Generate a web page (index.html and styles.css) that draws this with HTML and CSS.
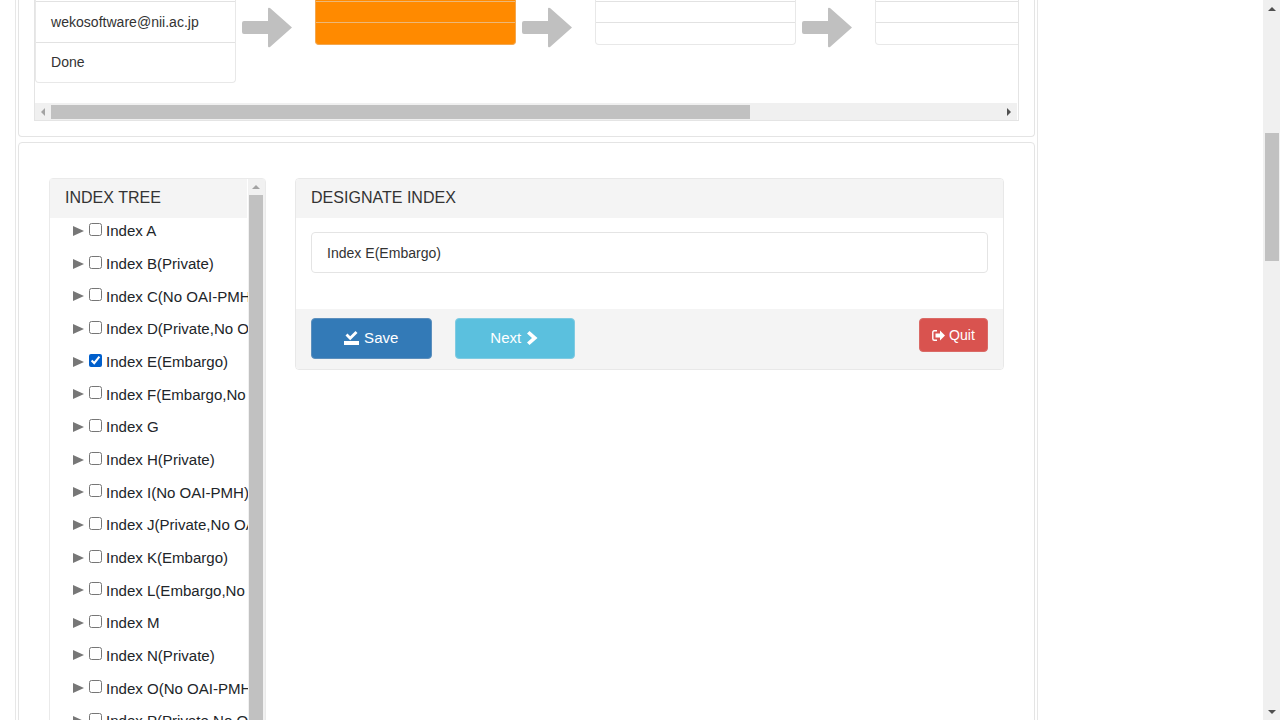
FILE: index.html
```
<!DOCTYPE html>
<html lang="en">
<head>
<meta charset="utf-8">
<title>Designate Index</title>
<link rel="stylesheet" href="styles.css">
</head>
<body>
<div class="content">
  <div class="wrapper">
    <section class="panel steps-panel">
      <div class="steps-box">
        <div class="steps">
          <ul class="card"><li class="tall">wekosoftware@nii.ac.jp</li><li class="tall last-tall">Done</li></ul>
          <svg class="arrow" viewBox="0 0 50 41"><path d="M2 14h24V2q0-2 2-1l22 19.500-22 19.500q-2 1-2-1V27H2q-2 0-2-2v-9q0-2 2-2z"/></svg>
          <ul class="card current"><li></li><li></li></ul>
          <svg class="arrow" viewBox="0 0 50 41"><path d="M2 14h24V2q0-2 2-1l22 19.500-22 19.500q-2 1-2-1V27H2q-2 0-2-2v-9q0-2 2-2z"/></svg>
          <ul class="card"><li></li><li></li></ul>
          <svg class="arrow" viewBox="0 0 50 41"><path d="M2 14h24V2q0-2 2-1l22 19.500-22 19.500q-2 1-2-1V27H2q-2 0-2-2v-9q0-2 2-2z"/></svg>
          <ul class="card"><li></li><li></li></ul>
        </div>
        <div class="hbar">
          <svg class="tip muted" viewBox="0 0 4 8"><path d="M4 0v8L0 4z"/></svg>
          <div class="hthumb"></div>
          <svg class="tip" viewBox="0 0 4 8"><path d="M0 0v8l4-4z"/></svg>
        </div>
      </div>
    </section>
    <section class="panel index-panel">
      <div class="tree">
        <div class="tree-main">
          <h3 class="heading">INDEX TREE</h3>
          <ul class="nodes">
            <li><i></i><input type="checkbox"><span>Index A</span></li>
            <li><i></i><input type="checkbox"><span>Index B(Private)</span></li>
            <li><i></i><input type="checkbox"><span>Index C(No OAI-PMH)</span></li>
            <li><i></i><input type="checkbox"><span>Index D(Private,No OAI-PMH)</span></li>
            <li><i></i><input type="checkbox" checked><span>Index E(Embargo)</span></li>
            <li><i></i><input type="checkbox"><span>Index F(Embargo,No OAI-PMH)</span></li>
            <li><i></i><input type="checkbox"><span>Index G</span></li>
            <li><i></i><input type="checkbox"><span>Index H(Private)</span></li>
            <li><i></i><input type="checkbox"><span>Index I(No OAI-PMH)</span></li>
            <li><i></i><input type="checkbox"><span>Index J(Private,No OAI-PMH)</span></li>
            <li><i></i><input type="checkbox"><span>Index K(Embargo)</span></li>
            <li><i></i><input type="checkbox"><span>Index L(Embargo,No OAI-PMH)</span></li>
            <li><i></i><input type="checkbox"><span>Index M</span></li>
            <li><i></i><input type="checkbox"><span>Index N(Private)</span></li>
            <li><i></i><input type="checkbox"><span>Index O(No OAI-PMH)</span></li>
            <li><i></i><input type="checkbox"><span>Index P(Private,No OAI-PMH)</span></li>
          </ul>
        </div>
        <div class="tree-bar">
          <svg viewBox="0 0 8 4"><path d="M0 4h8L4 0z"/></svg>
          <div class="tree-thumb"></div>
        </div>
      </div>
      <div class="designate">
        <h3 class="heading">DESIGNATE INDEX</h3>
        <div class="selected"><div class="item">Index E(Embargo)</div></div>
        <div class="footer">
          <button class="btn save"><svg viewBox="0 0 15 14"><path d="M0 10h15v4H0zM1.500 4.500l2-2 2.700 2.700L11.500 0l2 2-7.300 7.200z"/></svg>Save</button>
          <button class="btn next">Next<svg viewBox="0 0 11 14"><path d="M0 2.500L2.500 0 10.500 7l-8 7L0 11.500 5 7z"/></svg></button>
          <button class="btn quit"><svg viewBox="0 0 13 11"><path d="M5 .8H2.300Q.8.800.8 2.300v6.400q0 1.500 1.500 1.500H5" class="line"/><path d="M3.500 3.500H8V.5l5 5-5 5V7.500H3.500z"/></svg>Quit</button>
        </div>
      </div>
    </section>
  </div>
</div>
<div class="page-bar">
  <svg viewBox="0 0 8 4"><path d="M0 4h8L4 0z"/></svg>
  <div class="page-thumb"></div>
  <svg class="down" viewBox="0 0 8 4"><path d="M0 0h8L4 4z"/></svg>
</div>
</body>
</html>
```
FILE: styles.css
```
* { box-sizing: border-box; }
body {
  margin: 0;
  height: 720px;
  overflow: hidden;
  display: flex;
  background: #fff;
  color: #333;
  font-family: "Liberation Sans", Arial, sans-serif;
  font-size: 14.05px;
}
ul, h3 { margin: 0; padding: 0; list-style: none; font-weight: normal; }
svg { display: block; flex: none; }
.content { width: 1263px; padding-left: 15px; }
.wrapper {
  width: 1023px;
  height: 720px;
  padding: 0 2px;
  border: solid #e7e7e7;
  border-width: 0 1px;
  overflow: hidden;
}
.panel { border: 1px solid #e4e4e4; border-radius: 4px; }
.steps-panel {
  height: 137px;
  padding: 0 15px;
  border-top: 0;
  border-radius: 0 0 4px 4px;
  margin-bottom: 5px;
}
.steps-box {
  height: 121px;
  width: 985px;
  border: 1px solid #e4e4e4;
  border-top: 0;
  display: flex;
  flex-direction: column;
}
.steps { height: 103px; display: flex; align-items: flex-start; overflow: hidden; }
.card {
  flex: none;
  width: 201px;
  border: 1px solid #e8e8e8;
  border-top: 0;
  border-radius: 0 0 4px 4px;
  padding-top: 1px;
}
.card li { height: 21px; border-top: 1px solid #e2e2e2; }
.card li:last-child { height: 22px; }
.card li.tall { height: 41px; line-height: 41px; padding-left: 15px; }
.card li.last-tall { height: 40px; line-height: 38px; }
.current { background: #ff8a00; border-color: #f3a74f; overflow: hidden; }
.current li { border-color: #ecb777; }
.arrow { width: 50px; height: 41px; margin: 7px 23px 0 6px; fill: #c0c0c0; }
.hbar { height: 17px; display: flex; align-items: center; background: #f0f0f0; margin-right: 1px; padding: 0 6px; }
.hthumb { width: 699px; height: 14px; margin: 1px 0 0 6px; background: #c1c1c1; }
.tip { width: 4px; height: 8px; fill: #505050; margin-left: auto; }
.tip.muted { fill: #a3a3a3; margin-left: 0; }
.index-panel { height: 640px; padding: 35px 30px; display: flex; gap: 29px; align-items: flex-start; }
.tree {
  flex: none;
  width: 217px;
  height: 600px;
  border: 1px solid #eaeaea;
  border-radius: 4px;
  display: flex;
}
.tree-main { width: 198px; overflow: hidden; white-space: nowrap; }
.heading {
  height: 39px;
  line-height: 37px;
  padding-left: 15px;
  font-size: 16.05px;
  background: #f4f4f4;
}
.tree-main .heading { width: 197px; }
.nodes { font-size: 15.05px; color: #212529; margin-top: -3.4px; }
.nodes li { height: 32.67px; display: flex; align-items: center; padding-left: 23px; }
.nodes i { width: 0; height: 0; border: solid transparent; border-width: 5.5px 0 5.5px 11px; border-left-color: #777; }
.nodes input { width: 13px; height: 13px; margin: 0 4px 3px 5px; accent-color: #005fcc; }
.tree-bar { width: 17px; background: #f1f1f1; padding: 6px 2px 0 0; display: flex; flex-direction: column; align-items: center; }
.tree-bar svg { width: 8px; height: 4px; fill: #a3a3a3; }
.tree-thumb { width: 14px; flex: 1; margin-top: 6px; background: #c1c1c1; }
.designate { width: 709px; border: 1px solid #e8e8e8; border-radius: 4px; overflow: hidden; }
.selected { height: 91px; padding: 14px 15px; }
.item { height: 41px; line-height: 40px; padding-left: 15px; border: 1px solid #e4e4e4; border-radius: 4px; }
.footer { height: 60px; background: #f4f4f4; padding: 9px 15px; display: flex; align-items: flex-start; }
.btn {
  display: flex;
  align-items: center;
  justify-content: center;
  width: 120.5px;
  height: 41px;
  padding: 0 0 2px;
  border: 1px solid;
  border-radius: 4px;
  color: #fff;
  font: 15.05px "Liberation Sans", Arial, sans-serif;
}
.btn svg { fill: #fff; }
.save { background: #337ab7; border-color: #5c8fbd; }
.save svg { width: 15px; height: 14px; margin-right: 5px; }
.next { background: #5bc0de; border-color: #80cbe2; margin-left: 23px; padding-right: 1px; }
.next svg { width: 11px; height: 14px; margin-left: 6px; }
.quit { width: 69px; height: 34px; margin-left: auto; background: #d9534f; border-color: #da6a66; font-size: 14.05px; padding-bottom: 0; }
.quit svg { width: 13px; height: 11px; margin-right: 4px; }
.quit .line { fill: none; stroke: #fff; stroke-width: 1.4; }
.page-bar { width: 17px; background: #f0f0f0; display: flex; flex-direction: column; align-items: center; padding: 7px 0 6px; }
.page-bar svg { width: 8px; height: 4px; fill: #505050; }
.page-thumb { width: 14px; height: 128px; margin: 122px 0 0 1px; background: #c1c1c1; }
.page-bar .down { margin-top: auto; }
```
